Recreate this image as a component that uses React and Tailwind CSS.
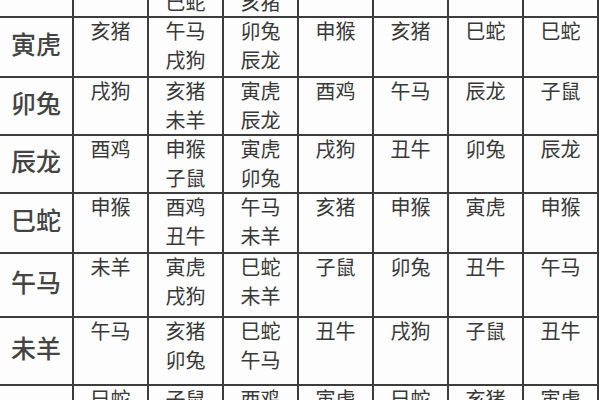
import React from "react";

const rows = [
  { head: "丑牛", cells: [["子鼠"], ["申猴", "巳蛇"], ["午马", "亥猪"], ["未羊"], ["寅虎"], ["午马"], ["卯兔"]] },
  { head: "寅虎", cells: [["亥猪"], ["午马", "戌狗"], ["卯兔", "辰龙"], ["申猴"], ["亥猪"], ["巳蛇"], ["巳蛇"]] },
  { head: "卯兔", cells: [["戌狗"], ["亥猪", "未羊"], ["寅虎", "辰龙"], ["酉鸡"], ["午马"], ["辰龙"], ["子鼠"]] },
  { head: "辰龙", cells: [["酉鸡"], ["申猴", "子鼠"], ["寅虎", "卯兔"], ["戌狗"], ["丑牛"], ["卯兔"], ["辰龙"]] },
  { head: "巳蛇", cells: [["申猴"], ["酉鸡", "丑牛"], ["午马", "未羊"], ["亥猪"], ["申猴"], ["寅虎"], ["申猴"]] },
  { head: "午马", cells: [["未羊"], ["寅虎", "戌狗"], ["巳蛇", "未羊"], ["子鼠"], ["卯兔"], ["丑牛"], ["午马"]] },
  { head: "未羊", cells: [["午马"], ["亥猪", "卯兔"], ["巳蛇", "午马"], ["丑牛"], ["戌狗"], ["子鼠"], ["丑牛"]] },
  { head: "申猴", cells: [["巳蛇"], ["子鼠"], ["酉鸡"], ["寅虎"], ["巳蛇"], ["亥猪"], ["寅虎"]] },
];

export default function App() {
  return (
    <div
      className="w-[600px] h-[400px] overflow-hidden bg-[#fdfdfd]"
      style={{ fontFamily: '"Noto Sans CJK SC", "Noto Sans", sans-serif' }}
    >
      <div className="-mt-[40px] w-[599px] pr-[2px] bg-[#3d3d3d] grid grid-cols-[72px_repeat(7,73px)] grid-rows-[56px_58px_56px_56px_58px_62px_66px_60px] gap-[2px]">
        {rows.map((row) => (
          <React.Fragment key={row.head}>
            <div className="bg-[#fdfdfd] flex items-center justify-center pb-[6px] text-[25px] font-medium text-[#444]">
              {row.head}
            </div>
            {row.cells.map((lines, i) => (
              <div
                key={i}
                className="bg-[#fdfdfd] flex flex-col items-center text-[20px] leading-[29px] text-[#383838]"
              >
                <div className="-mt-[2px] flex flex-col items-center">
                  {lines.map((t) => (
                    <span key={t}>{t}</span>
                  ))}
                </div>
              </div>
            ))}
          </React.Fragment>
        ))}
      </div>
    </div>
  );
}
